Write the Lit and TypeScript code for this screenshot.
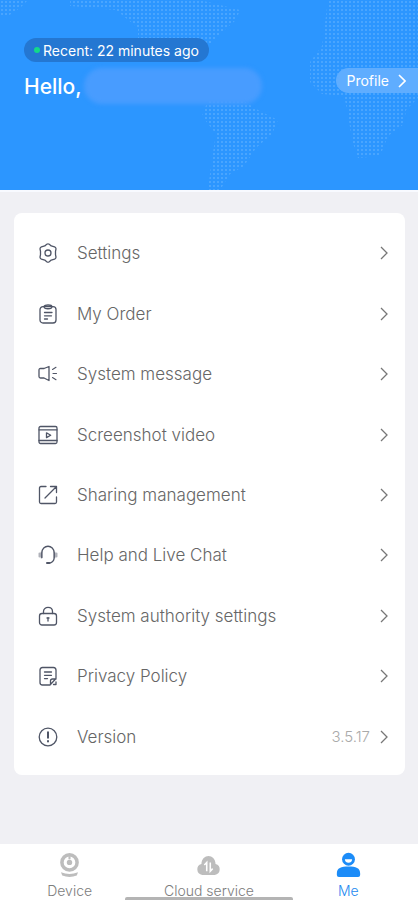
import { LitElement, html, css, svg, type TemplateResult } from "lit";
import { customElement } from "lit/decorators.js";
import { classMap } from "lit/directives/class-map.js";

type Item = { label: string; icon: TemplateResult; value?: string };

const items: Item[] = [
  {
    label: "Settings",
    icon: svg`<path d="M8.700 1.300Q10 .5 11.300 1.300L13.200 2.900 16.600 3.900Q17.900 4.400 18 5.800L17.500 8.300V11.700L18 14.200Q17.900 15.600 16.600 16.100L13.200 17.100 11.300 18.700Q10 19.500 8.700 18.700L6.800 17.100 3.400 16.100Q2.100 15.600 2 14.200L2.500 11.700V8.300L2 5.800Q2.100 4.400 3.400 3.900L6.800 2.900Z"/><circle cx="10" cy="10" r="3"/>`,
  },
  {
    label: "My Order",
    icon: svg`<rect x="2" y="2.600" width="16" height="16.400" rx="3"/><path d="M6 2.800C6 .4 14 .4 14 2.800S6 5.600 6 2.800ZM6.500 8.500h7.500M6.500 11.800h7M6.500 15h3"/>`,
  },
  {
    label: "System message",
    icon: svg`<path d="M6 4.500H2.500Q1 4.500 1 6v6.500Q1 14 2.500 14H6M6 4.500 11 2.500V16.500L6 14"/><path class="thin" d="m14.500 5.500 3.500-2.200M15 9.500h3.500M14.500 13.500l3.500 2.200"/>`,
  },
  {
    label: "Screenshot video",
    icon: svg`<rect x="1" y="1.500" width="18" height="17" rx="1.500"/><path d="M1 4.800h18M1 15.500h18"/><path d="m8.500 7.800 4.200 2.400-4.200 2.400Z"/>`,
  },
  {
    label: "Sharing management",
    icon: svg`<path d="M8 1.500H3Q1.500 1.500 1.500 3v14q0 1.500 1.500 1.500h14q1.500 0 1.500-1.500v-5M7 13 18 2M12.500 1.500h6V7.500"/>`,
  },
  {
    label: "Help and Live Chat",
    icon: svg`<path d="M3.800 12.500V8C3.800-1 16.200-1 16.200 8v4.500Q16 16.500 12.500 17.800"/><path class="heavy" d="M1.500 8.500v3M18.500 8.500v3M3.500 7.500v5M16.500 7.500v5" opacity=".45"/><path class="heavy" d="M9 18h2.500"/>`,
  },
  {
    label: "System authority settings",
    icon: svg`<rect x="1.500" y="7.500" width="17" height="11.500" rx="2.500"/><path d="M5.500 7.500V5.500c0-5.500 9-5.500 9 0V7.500M9 12h2"/><path d="M10 12v3"/>`,
  },
  {
    label: "Privacy Policy",
    icon: svg`<path d="M18 12.500V4q0-2.500-2.500-2.500h-11Q2 1.500 2 4v12.500q0 2.500 2.500 2.500H12L18 12.500M12.500 18.500v-3.500q0-2 2-2H18M6.500 6h7M6.500 9.300h7M6.500 12.600h3"/><path d="M15.500 18.500H18V16"/>`,
  },
  {
    label: "Version",
    value: "3.5.17",
    icon: svg`<circle cx="10" cy="10" r="8.800"/><path class="heavy" d="M10 5.200v5.600M10 14v.6"/>`,
  },
];

const tabs = [
  {
    label: "Device",
    active: false,
    icon: svg`<path fill-rule="evenodd" d="M12 1a9 9 0 1 0 0 18 9 9 0 0 0 0-18Zm0 3.400a5.600 5.600 0 1 1 0 11.200 5.600 5.600 0 0 1 0-11.200Z"/><circle cx="12" cy="10" r="2.600"/><path d="M11 4h2v3h-2Z"/><path d="M3.800 19.500Q12 23 20.200 19.500L19 22.700Q12 25.300 5 22.700Z"/>`,
  },
  {
    label: "Cloud service",
    active: false,
    icon: svg`<path d="M6 22a5.300 5.300 0 0 1-.8-10.400C5.500 1.200 18.500 1.200 18.800 11.600A5.300 5.300 0 0 1 18 22Z"/><path class="cut" d="M10.300 18.500V10L8 12.500M13.700 10v8.500l2.300-2.500"/>`,
  },
  {
    label: "Me",
    active: true,
    icon: svg`<circle cx="12" cy="7" r="6.200"/><path d="M.8 20.500c0-5 4-6.500 11.200-6.500s11.200 1.500 11.200 6.500v1.500q0 2-2 2H2.800q-2 0-2-2Z"/><path class="mouth" d="M8.500 7h7c0 4.500-7 4.500-7 0Z"/>`,
  },
];

const chevron = html`<svg class="chevron" viewBox="0 0 8 14" aria-hidden="true"><path d="m1 1 6 6-6 6" /></svg>`;

@customElement("app-root")
export class AppRoot extends LitElement {
  static styles = css`
    :host {
      display: flex;
      flex-direction: column;
      min-height: 100vh;
      background: #f0f0f4;
      color: #666;
      font-family: Inter, "Liberation Sans", sans-serif;
    }
    * {
      box-sizing: border-box;
    }
    button {
      border: 0;
      padding: 0;
      background: none;
      color: inherit;
      font: inherit;
      text-align: left;
    }
    svg {
      flex: none;
      fill: none;
      stroke: currentColor;
    }
    header {
      position: relative;
      display: flex;
      flex-direction: column;
      align-items: flex-start;
      gap: 8px;
      height: 192px;
      padding: 38px 0 0 24px;
      overflow: hidden;
      background: #2c96ff;
      border-bottom: 2px solid #f8faff;
      color: #fff;
    }
    .map {
      position: absolute;
      inset: 0;
      width: 100%;
      height: 100%;
      stroke: none;
    }
    .map .dot {
      fill: #59aeff;
    }
    .map .land {
      fill: url(#dots);
    }
    .recent {
      position: relative;
      display: flex;
      align-items: center;
      gap: 3px;
      height: 24px;
      padding: 0 10px;
      border-radius: 12px;
      background: #2477d2;
      font-size: 14px;
    }
    .recent::before {
      content: "";
      width: 6px;
      height: 6px;
      border-radius: 50%;
      background: #12d98a;
    }
    .hello {
      position: relative;
      display: flex;
      align-items: center;
      gap: 2px;
      height: 32px;
      margin: 0;
      font-size: 21px;
      font-weight: 500;
    }
    .name {
      width: 178px;
      height: 36px;
      border-radius: 18px;
      background: #489cff;
      filter: blur(2px);
    }
    .profile {
      position: absolute;
      top: 68px;
      right: 0;
      display: flex;
      align-items: center;
      gap: 9px;
      height: 25px;
      padding: 0 12px 0 11px;
      border-radius: 13px 0 0 13px;
      background: #5fadff;
      font-size: 14px;
    }
    .chevron {
      width: 8px;
      height: 14px;
      color: #777;
      stroke-width: 1.3;
    }
    .profile .chevron {
      color: #fff;
      stroke-width: 1.6;
    }
    main {
      flex: 1;
      display: flex;
      padding: 21px 13px 69px 14px;
    }
    .card {
      flex: 1;
      display: flex;
      flex-direction: column;
      margin: 0;
      padding: 10px 0 8px;
      border-radius: 8px;
      background: #fff;
      list-style: none;
    }
    .card li {
      flex: 1;
      display: flex;
    }
    .row {
      flex: 1;
      display: flex;
      align-items: center;
      min-height: 44px;
      padding: 0 17px 0 24px;
      font-size: 17px;
      font-weight: 300;
    }
    .row .icon {
      width: 20px;
      height: 20px;
      margin-right: 19px;
      color: #4f5566;
      stroke-width: 1.3;
      stroke-linejoin: round;
      stroke-linecap: round;
    }
    .heavy {
      stroke-width: 2;
    }
    .thin {
      stroke-width: 1.1;
    }
    .label {
      flex: 1;
    }
    .value {
      margin-right: 10px;
      color: #aaa;
      font-size: 15px;
    }
    nav {
      position: relative;
      display: grid;
      grid-template-columns: repeat(3, 1fr);
      height: 56px;
      padding-top: 8px;
      overflow: hidden;
      background: #fff;
    }
    nav::after {
      content: "";
      position: absolute;
      left: 30%;
      right: 30%;
      bottom: 0;
      height: 3px;
      border-radius: 2px 2px 0 0;
      background: #b4b4b4;
    }
    .tab {
      display: flex;
      flex-direction: column;
      align-items: center;
      gap: 4px;
      color: #7d7d7d;
      font-size: 14px;
      font-weight: 300;
      line-height: 18px;
      text-decoration: none;
    }
    .tab svg {
      width: 25px;
      height: 26px;
      fill: #bdbdbd;
      stroke: none;
    }
    .tab.active {
      color: #2489f0;
    }
    .tab.active svg {
      fill: #1c8cf8;
    }
    .tab .cut {
      fill: none;
      stroke: #fff;
      stroke-width: 1.5;
    }
    .tab .mouth {
      fill: #fff;
    }
  `;

  render() {
    return html`
      <header>
        <svg class="map" viewBox="0 0 418 190" preserveAspectRatio="xMaxYMin slice" aria-hidden="true">
          <defs>
            <pattern id="dots" width="4" height="4" patternUnits="userSpaceOnUse">
              <rect class="dot" x="1" y="1" width="2" height="2" opacity=".65" />
            </pattern>
          </defs>
          <path class="land" d="M0 0h28l-8 8-12 8H0ZM70 0h130l40 10-4 10-16 14-14 14-14 14-30-6-20 4-4-12V28L116 10 70 6ZM208 100h34l16 10 20 10-6 14-16 14-12 18-14 8-10 16h-12l4-32 4-24-14-18ZM328 0h90v98l-12 12-2 14-16 12-8 20-22 2-6-18-4-26-4-18-22-2-12-12V62l12-16Z" />
        </svg>
        <div class="recent">Recent: 22 minutes ago</div>
        <h1 class="hello">Hello,<span class="name"></span></h1>
        <button class="profile">Profile ${chevron}</button>
      </header>
      <main>
        <ul class="card">
          ${items.map(
            (item) => html`<li>
              <button class="row">
                <svg class="icon" viewBox="0 0 20 20" aria-hidden="true">${item.icon}</svg>
                <span class="label">${item.label}</span>
                ${item.value ? html`<span class="value">${item.value}</span>` : ""} ${chevron}
              </button>
            </li>`,
          )}
        </ul>
      </main>
      <nav>
        ${tabs.map(
          (tab) => html`<a href="#" class=${classMap({ tab: true, active: tab.active })}>
            <svg viewBox="0 0 24 25" aria-hidden="true">${tab.icon}</svg>
            <span>${tab.label}</span>
          </a>`,
        )}
      </nav>
    `;
  }
}
